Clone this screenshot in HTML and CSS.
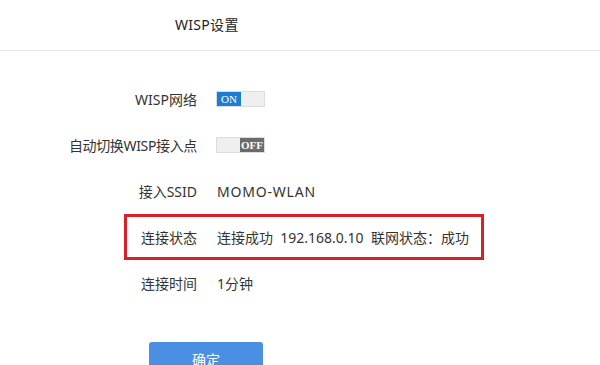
FILE: index.html
```html
<!DOCTYPE html>
<html lang="zh-CN">
<head>
<meta charset="utf-8">
<link rel="stylesheet" href="styles.css">
</head>
<body>
<div class="header"><span class="title">WISP设置</span></div>
<div class="form">
  <div class="row">
    <div class="label">WISP网络</div>
    <div class="value"><span class="toggle on"><span class="knob">ON</span><span class="rest"></span></span></div>
  </div>
  <div class="row">
    <div class="label tight">自动切换WISP接入点</div>
    <div class="value"><span class="toggle off"><span class="rest"></span><span class="knob">OFF</span></span></div>
  </div>
  <div class="row">
    <div class="label">接入SSID</div>
    <div class="value ssid">MOMO-WLAN</div>
  </div>
  <div class="row boxed">
    <div class="label">连接状态</div>
    <div class="value">连接成功&nbsp;&nbsp;192.168.0.10&nbsp;&nbsp;联网状态：成功</div>
  </div>
  <div class="row">
    <div class="label">连接时间</div>
    <div class="value">1分钟</div>
  </div>
  <div class="actions">
    <button class="btn">确定</button>
  </div>
</div>
</body>
</html>
```
FILE: styles.css
```css
html, body {
  margin: 0;
  padding: 0;
  background: #fff;
}
body {
  font-family: "Noto Sans", "Noto Sans CJK SC", sans-serif;
  font-size: 14px;
  color: #333;
  width: 600px;
  height: 365px;
  overflow: hidden;
}
.header {
  height: 51px;
  border-bottom: 1px solid #e6e6e6;
  display: flex;
  align-items: center;
  padding-left: 175px;
  box-sizing: border-box;
  padding-bottom: 2px;
}
.title {
  font-size: 14px;
  color: #222;
  letter-spacing: 0.3px;
}
.form {
  padding-top: 25px;
}
.row {
  display: flex;
  align-items: center;
  height: 46px;
}
.label {
  width: 197px;
  text-align: right;
  flex: none;
}
.label.tight {
  letter-spacing: -0.35px;
}
.value {
  margin-left: 20px;
  display: flex;
  align-items: center;
}
.value.ssid {
  letter-spacing: 0.8px;
}
.row.boxed {
  box-sizing: border-box;
  margin-left: 124px;
  width: 360px;
  border: 3px solid #d8202b;
}
.row.boxed .label {
  width: 70px;
}
.toggle {
  display: flex;
  width: 47px;
  height: 14px;
  margin-left: -1px;
  border: 1px solid #dcdcdc;
  background: #efefef;
  box-sizing: content-box;
}
.toggle .knob {
  width: 24px;
  height: 14px;
  color: #fff;
  font-family: "Liberation Serif", serif;
  font-size: 11px;
  line-height: 14px;
  text-align: center;
}
.toggle .rest {
  flex: 1;
}
.toggle.on .knob {
  background: #1a7fd4;
}
.toggle.off .knob {
  background: #6b6b6b;
  font-weight: bold;
}
.actions {
  padding-top: 36px;
  padding-left: 149px;
}
.btn {
  width: 114px;
  height: 34px;
  border: none;
  border-radius: 3px;
  background: #4a8fe1;
  color: #fff;
  font-family: "Noto Sans CJK SC", sans-serif;
  font-size: 14px;
  padding: 0;
}
```
